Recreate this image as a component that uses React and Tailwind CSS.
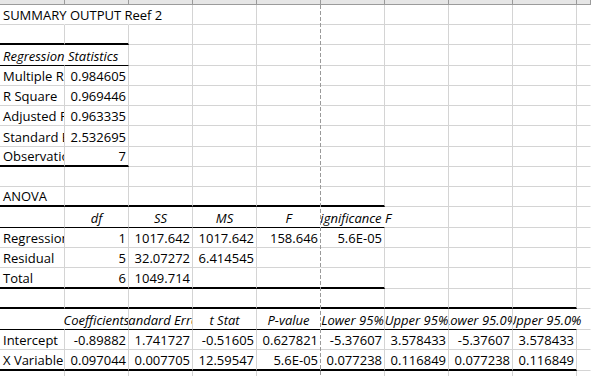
import React from 'react';

// row heights (Excel rows are ~20.3px here, so some rows get 21)
const ROW_H = [
  'h-[20px]', 'h-[20px]', 'h-[21px]', 'h-[20px]', 'h-[20px]', 'h-[20px]', 'h-[21px]',
  'h-[20px]', 'h-[20px]', 'h-[20px]', 'h-[21px]', 'h-[20px]', 'h-[20px]', 'h-[21px]',
  'h-[20px]', 'h-[21px]', 'h-[20px]', 'h-[21px]', 'h-[20px]',
];

const L = (t, ov) => ({ t, a: 'l', ov });
const R = (t) => ({ t, a: 'r' });
const C = (t, ov) => ({ t, a: 'c', i: true, ov });

const rows = [
  [L('SUMMARY OUTPUT Reef 2', 'r')],
  [],
  [{ t: 'Regression Statistics', a: 'l', i: true, ov: 'r' }],
  [L('Multiple R'), R('0.984605')],
  [L('R Square'), R('0.969446')],
  [L('Adjusted R Square'), R('0.963335')],
  [L('Standard Error'), R('2.532695')],
  [L('Observations'), R('7')],
  [],
  [L('ANOVA')],
  [null, C('df'), C('SS'), C('MS'), C('F'), C('Significance F', 'r')],
  [L('Regression'), R('1'), R('1017.642'), R('1017.642'), R('158.646'), R('5.6E-05')],
  [L('Residual'), R('5'), R('32.07272'), R('6.414545')],
  [L('Total'), R('6'), R('1049.714')],
  [],
  [null, C('Coefficients', 'l'), C('Standard Error'), C('t Stat'), C('P-value'), C('Lower 95%'), C('Upper 95%'), C('Lower 95.0%'), C('Upper 95.0%', 'r')],
  [L('Intercept'), R('-0.89882'), R('1.741727'), R('-0.51605'), R('0.627821'), R('-5.37607'), R('3.578433'), R('-5.37607'), R('3.578433')],
  [L('X Variable 1'), R('0.097044'), R('0.007705'), R('12.59547'), R('5.6E-05'), R('0.077238'), R('0.116849'), R('0.077238'), R('0.116849')],
  [],
];

// table rules under a row: [kind, last column]
const rules = { 1: ['thick', 1], 2: ['thin', 1], 7: ['thick', 1], 9: ['thick', 5], 10: ['thin', 5], 13: ['thick', 5], 14: ['thick', 8], 15: ['thin', 8], 17: ['thick', 8] };

// gridlines hidden where text spills into an empty neighbour
const noRight = { 0: [0, 1], 2: [0], 10: [5], 15: [0, 8] };

const cellClass = (r, c) => {
  const rule = rules[r];
  let bottom = 'border-b border-b-[#d4d4d4]';
  if (rule && c <= rule[1]) bottom = rule[0] === 'thick' ? 'border-b-2 border-b-black' : 'border-b border-b-black';
  let right = 'border-r border-r-[#d4d4d4]';
  if (c === 9 || c === 4 || (noRight[r] && noRight[r].includes(c))) right = 'border-r border-r-transparent';
  return `${bottom} ${right}`;
};

const Cell = ({ cell }) => {
  if (!cell) return null;
  const align = cell.a === 'r' ? 'justify-end pr-[2px]' : cell.a === 'c' ? 'justify-center' : 'justify-start pl-[3px]';
  let clip = 'overflow-hidden';
  if (cell.ov === 'r') clip = '[clip-path:inset(0_-300px_0_0)]';
  if (cell.ov === 'l') clip = '[clip-path:inset(0_0_0_-100px)]';
  return (
    <div className={`absolute inset-0 flex items-end pb-[1px] ${align} ${clip}`}>
      <span className={`whitespace-nowrap leading-[16px] ${cell.i ? 'italic' : ''}`}>{cell.t}</span>
    </div>
  );
};

export default function App() {
  return (
    <div className="relative w-[591px] h-[376px] overflow-hidden bg-white text-black text-[13px] [font-family:'Open_Sans',sans-serif]">
      {/* column header strip */}
      <div className="grid grid-cols-[65px_repeat(8,64px)_1fr] h-[5px] bg-[#e6e6e6] border-b border-b-[#9b9b9b]">
        {Array.from({ length: 10 }).map((_, c) => (
          <div key={c} className="border-r border-r-[#9b9b9b]" />
        ))}
      </div>

      {rows.map((row, r) => (
        <div key={r} className={`grid grid-cols-[65px_repeat(8,64px)_1fr] ${ROW_H[r]}`}>
          {Array.from({ length: 10 }).map((_, c) => (
            <div key={c} className={`relative ${cellClass(r, c)}`}>
              <Cell cell={row[c]} />
            </div>
          ))}
        </div>
      ))}

      {/* page break */}
      <div className="absolute left-[320px] top-[5px] bottom-0 w-px bg-[repeating-linear-gradient(to_bottom,#9a9a9a_0_4px,transparent_4px_6px)]" />
    </div>
  );
}
